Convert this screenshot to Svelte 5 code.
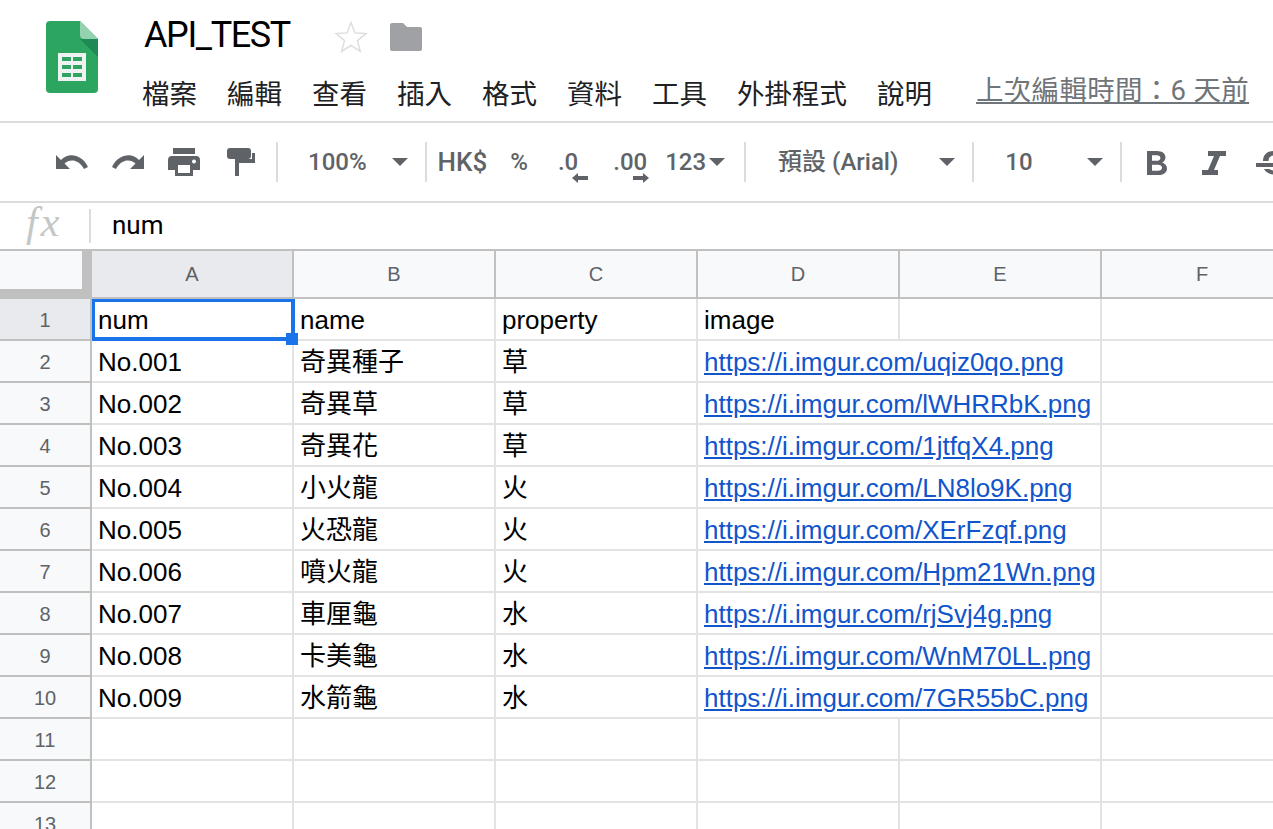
<script lang="ts">
  const menus = ["檔案", "編輯", "查看", "插入", "格式", "資料", "工具", "外掛程式", "說明"];
  const columns = ["A", "B", "C", "D", "E", "F"];
  const rows = [
    ["No.001", "奇異種子", "草", "https://i.imgur.com/uqiz0qo.png"],
    ["No.002", "奇異草", "草", "https://i.imgur.com/lWHRRbK.png"],
    ["No.003", "奇異花", "草", "https://i.imgur.com/1jtfqX4.png"],
    ["No.004", "小火龍", "火", "https://i.imgur.com/LN8lo9K.png"],
    ["No.005", "火恐龍", "火", "https://i.imgur.com/XErFzqf.png"],
    ["No.006", "噴火龍", "火", "https://i.imgur.com/Hpm21Wn.png"],
    ["No.007", "車厘龜", "水", "https://i.imgur.com/rjSvj4g.png"],
    ["No.008", "卡美龜", "水", "https://i.imgur.com/WnM70LL.png"],
    ["No.009", "水箭龜", "水", "https://i.imgur.com/7GR55bC.png"]
  ];
</script>

<div class="page">
  <header class="titlebar">
    <svg class="logo" width="52" height="72" viewBox="0 0 52 72">
      <path d="M4 0H34L52 18V68a4 4 0 0 1-4 4H4a4 4 0 0 1-4-4V4a4 4 0 0 1 4-4z" fill="#2ba55f" />
      <path d="M34 18L52 36V18z" fill="#1f8a55" />
      <path d="M34 0L52 18H38a4 4 0 0 1-4-4z" fill="#94d1ae" />
      <path d="M12 32H40V60H12z" fill="#f1f1f1" />
      <path d="M16 36H25V40H16zM27 36H36V40H27zM16 44H25V48H16zM27 44H36V48H27zM16 52H25V56H16zM27 52H36V56H27z" fill="#2ba55f" />
    </svg>
    <div class="titlemain">
      <div class="docline">
        <span class="docname">API_TEST</span>
        <svg class="star" width="34" height="34" viewBox="0 0 34 34">
          <path d="M17 2.500l4 10.400 11 .7-8.500 7 2.800 10.800L17 25.400l-9.300 6 2.800-10.800-8.500-7 11-.7z" fill="none" stroke="#dcdcdc" stroke-width="1.4" />
        </svg>
        <svg class="folder" width="32" height="28" viewBox="0 0 32 28">
          <path d="M2 0H13L17 4H30a2 2 0 0 1 2 2V26a2 2 0 0 1-2 2H2a2 2 0 0 1-2-2V2a2 2 0 0 1 2-2z" fill="#a0a1a4" />
        </svg>
      </div>
      <nav class="menubar">
        {#each menus as menu}
          <span>{menu}</span>
        {/each}
        <span class="lastedit">上次編輯時間：6 天前</span>
      </nav>
    </div>
  </header>

  <div class="toolbar">
    <svg class="tool undo" width="32" height="16" viewBox="0 0 32 16"><path d="M0 1V15H14L8.500 9.500C14 4.500 23 5.500 28 15L32 13C26 0 12-2 5 6z" fill="#5f6368" /></svg>
    <svg class="tool redo" width="32" height="16" viewBox="0 0 32 16"><path d="M32 1V15H18L23.500 9.500C18 4.500 9 5.500 4 15L0 13C6 0 20-2 27 6z" fill="#5f6368" /></svg>
    <svg class="tool print" width="32" height="28" viewBox="0 0 32 28"><path d="M5 0H27V6H5zM4 8H28a4 4 0 0 1 4 4V22H25V28H7V22H0V12a4 4 0 0 1 4-4zM10 17V25H22V17zM26 11.500a2 2 0 1 0 .01 0z" fill="#5f6368" fill-rule="evenodd" /></svg>
    <svg class="tool paint" width="28" height="28" viewBox="0 0 28 28"><path d="M3 0H21a3 3 0 0 1 3 3V8a3 3 0 0 1-3 3H3a3 3 0 0 1-3-3V3a3 3 0 0 1 3-3zM25 5H28V15H12V28H8V11H25z" fill="#5f6368" /></svg>
    <i class="sep first"></i>
    <span class="tt zoomlevel">100%</span>
    <i class="caret zoomcaret"></i>
    <i class="sep"></i>
    <span class="tt hk">HK$</span>
    <span class="tt pct">%</span>
    <span class="tt dec dec1">.0<svg width="16" height="10" viewBox="0 0 16 10"><path d="M0 5L6 0V3H16V7H6V10z" fill="#5f6368" /></svg></span>
    <span class="tt dec dec2">.00<svg width="16" height="10" viewBox="0 0 16 10"><path d="M16 5L10 0V3H0V7H10V10z" fill="#5f6368" /></svg></span>
    <span class="tt n123">123</span>
    <i class="caret n123caret"></i>
    <i class="sep"></i>
    <span class="tt fontname">預設 (Arial)</span>
    <i class="caret fontcaret"></i>
    <i class="sep"></i>
    <span class="tt fontsize">10</span>
    <i class="caret sizecaret"></i>
    <i class="sep"></i>
    <svg class="fmt bold" width="20" height="24" viewBox="0 0 20 24"><path d="M0 0H10C15.500 0 18.500 2.800 18.500 6.500C18.500 8.800 17 10.600 15.200 11.500C18 12.400 20 14.400 20 17.500C20 21.600 16.500 24 12 24H0zM5 4.200V9.700H9.700C12 9.700 13.400 8.800 13.400 6.900C13.400 5.100 12 4.200 9.700 4.200zM5 13.800V19.800H11C13.300 19.800 15 18.900 15 16.800C15 14.800 13.300 13.800 11 13.800z" fill="#5f6368" fill-rule="evenodd" /></svg>
    <svg class="fmt italic" width="24" height="24" viewBox="0 0 24 24"><path d="M6 0H24V5H18L12 19H16V24H0V19H6L12 5H6z" fill="#5f6368" /></svg>
    <svg class="fmt strike" width="24" height="24" viewBox="0 0 24 24"><path d="M0 12H24V16H0zM7 10C7 4 11 0 18 0H24V4.500H18C15 4.500 12.500 6.500 12.500 10zM8 18C10 22 14 24 24 24V19.500H18C16 19.500 14 18.500 13 18z" fill="#5f6368" /></svg>
  </div>

  <div class="formulabar">
    <span class="fx">fx</span>
    <i class="fxsep"></i>
    <span class="fxvalue">num</span>
  </div>

  <div class="sheet">
    <div class="corner"><span class="cornerbox"></span></div>
    {#each columns as col, i}
      <div class="colhead" class:active={i === 0}>{col}</div>
    {/each}

    <div class="rowhead active">1</div>
    <div class="cell selected">num<span class="handle"></span></div>
    <div class="cell">name</div>
    <div class="cell">property</div>
    <div class="cell">image</div>
    <div class="cell"></div>
    <div class="cell"></div>

    {#each rows as row, i}
      <div class="rowhead">{i + 2}</div>
      <div class="cell">{row[0]}</div>
      <div class="cell">{row[1]}</div>
      <div class="cell">{row[2]}</div>
      <div class="cell wide"><span class="link">{row[3]}</span></div>
      <div class="cell"></div>
    {/each}

    {#each [11, 12, 13] as n}
      <div class="rowhead">{n}</div>
      {#each columns as col}
        <div class="cell"></div>
      {/each}
    {/each}
  </div>
</div>

<style>
  :global(body) {
    margin: 0;
    background: #fff;
    overflow: hidden;
  }

  .page {
    width: 1273px;
    height: 829px;
    overflow: hidden;
    font-family: Roboto, "Noto Sans CJK TC", sans-serif;
  }

  .titlebar {
    display: flex;
    height: 121px;
    border-bottom: 2px solid #dadce0;
  }

  .logo {
    margin: 21px 0 0 46px;
    flex: none;
  }

  .titlemain {
    margin-left: 46px;
    flex: 1;
  }

  .docline {
    display: flex;
    align-items: center;
    height: 70px;
  }

  .docname {
    font-size: 36px;
    letter-spacing: -1.4px;
    color: #000;
    width: 190px;
  }

  .star {
    margin-top: 4px;
  }

  .folder {
    margin: 3px 0 0 22px;
  }

  .menubar {
    display: flex;
    align-items: center;
    font-size: 27.5px;
    line-height: 36px;
    color: #202124;
    gap: 30px;
    margin-left: -2px;
    padding-top: 4px;
    box-sizing: border-box;
    height: 46px;
    white-space: nowrap;
  }

  .lastedit {
    font-size: 27.5px;
    color: #70757a;
    text-decoration: underline;
    margin: -8px 0 0 14px;
    letter-spacing: 0.3px;
  }

  .toolbar {
    display: flex;
    align-items: center;
    height: 78px;
    padding-left: 56px;
    border-bottom: 2px solid #dadce0;
    overflow: hidden;
    white-space: nowrap;
  }

  .tool {
    flex: none;
  }

  .redo { margin-left: 24px; }
  .print { margin-left: 24px; }
  .paint { margin-left: 27px; }

  .sep {
    width: 2px;
    height: 40px;
    background: #dadce0;
    flex: none;
    margin-left: 21px;
  }

  .tt {
    font-size: 24px;
    line-height: 30px;
    font-weight: 500;
    color: #5f6368;
    flex: none;
  }

  .zoomlevel { margin-left: 30px; }
  .zoomcaret { margin-left: 25px; }

  .caret {
    width: 0;
    height: 0;
    border-left: 8px solid transparent;
    border-right: 8px solid transparent;
    border-top: 8px solid #5f6368;
    flex: none;
  }

  .zoomcaret + .sep { margin-left: 17px; }

  .hk { margin-left: 11px; font-size: 26px; }
  .pct { margin-left: 23px; }

  .dec {
    position: relative;
    display: block;
  }

  .dec svg {
    position: absolute;
    top: 26px;
  }

  .dec1 { margin-left: 30px; }
  .dec1 svg { left: 14px; }
  .dec2 { margin-left: 35px; }
  .dec2 svg { left: 20px; }
  .n123 { margin-left: 18px; }
  .n123caret { margin-left: 3px; }
  .n123caret + .sep { margin-left: 19px; }

  .fontname { margin-left: 32px; }
  .fontcaret { margin-left: 41px; }
  .fontcaret + .sep { margin-left: 17px; }
  .fontsize { margin-left: 31px; }
  .sizecaret { margin-left: 54px; }
  .sizecaret + .sep { margin-left: 17px; }

  .fmt {
    flex: none;
    margin-top: 2px;
  }

  .bold { margin-left: 25px; }
  .italic { margin-left: 35px; }
  .strike { margin-left: 30px; }

  .formulabar {
    display: flex;
    align-items: center;
    height: 46px;
    border-bottom: 2px solid #c0c0c0;
  }

  .fx {
    font-family: "Liberation Serif", serif;
    font-style: italic;
    font-size: 42px;
    letter-spacing: 3px;
    color: #c4c7c5;
    margin: -8px 0 0 26px;
    width: 63px;
  }

  .fxsep {
    width: 2px;
    height: 34px;
    background: #dadce0;
  }

  .fxvalue {
    font-size: 26px;
    line-height: 30px;
    margin: -3px 0 0 21px;
    color: #000;
  }

  .sheet {
    display: grid;
    grid-template-columns: 92px repeat(6, 202px);
    grid-template-rows: 48px repeat(13, 42px);
    font-family: "Liberation Sans", "Noto Sans CJK TC", sans-serif;
  }

  .corner {
    background: #c0c0c0;
    padding: 0 10px 10px 0;
    box-sizing: border-box;
  }

  .cornerbox {
    display: block;
    height: 100%;
    background: #f8f9fa;
  }

  .colhead,
  .rowhead {
    display: flex;
    align-items: center;
    justify-content: center;
    background: #f8f9fa;
    border-right: 2px solid #c0c0c0;
    border-bottom: 2px solid #c0c0c0;
    box-sizing: border-box;
    font-size: 20px;
    color: #5f6368;
  }

  .rowhead {
    padding-top: 3px;
  }

  .colhead.active,
  .rowhead.active {
    background: #e8eaed;
  }

  .cell {
    position: relative;
    display: flex;
    align-items: center;
    padding: 2px 0 0 6px;
    font-size: 26px;
    line-height: 30px;
    color: #000;
    white-space: nowrap;
    border-right: 2px solid #e2e3e3;
    border-bottom: 2px solid #e2e3e3;
    box-sizing: border-box;
  }

  .wide {
    grid-column: span 2;
    overflow: hidden;
  }

  .link {
    color: #1155cc;
    text-decoration: underline;
  }

  .selected::after {
    content: "";
    position: absolute;
    top: 0;
    left: 0;
    right: -3px;
    bottom: -2px;
    border: solid #1a73e8;
    border-width: 3px 4px 4px 3px;
    box-sizing: border-box;
  }

  .handle {
    position: absolute;
    z-index: 1;
    right: -6px;
    bottom: -6px;
    width: 12px;
    height: 12px;
    background: #1a73e8;
  }
</style>
